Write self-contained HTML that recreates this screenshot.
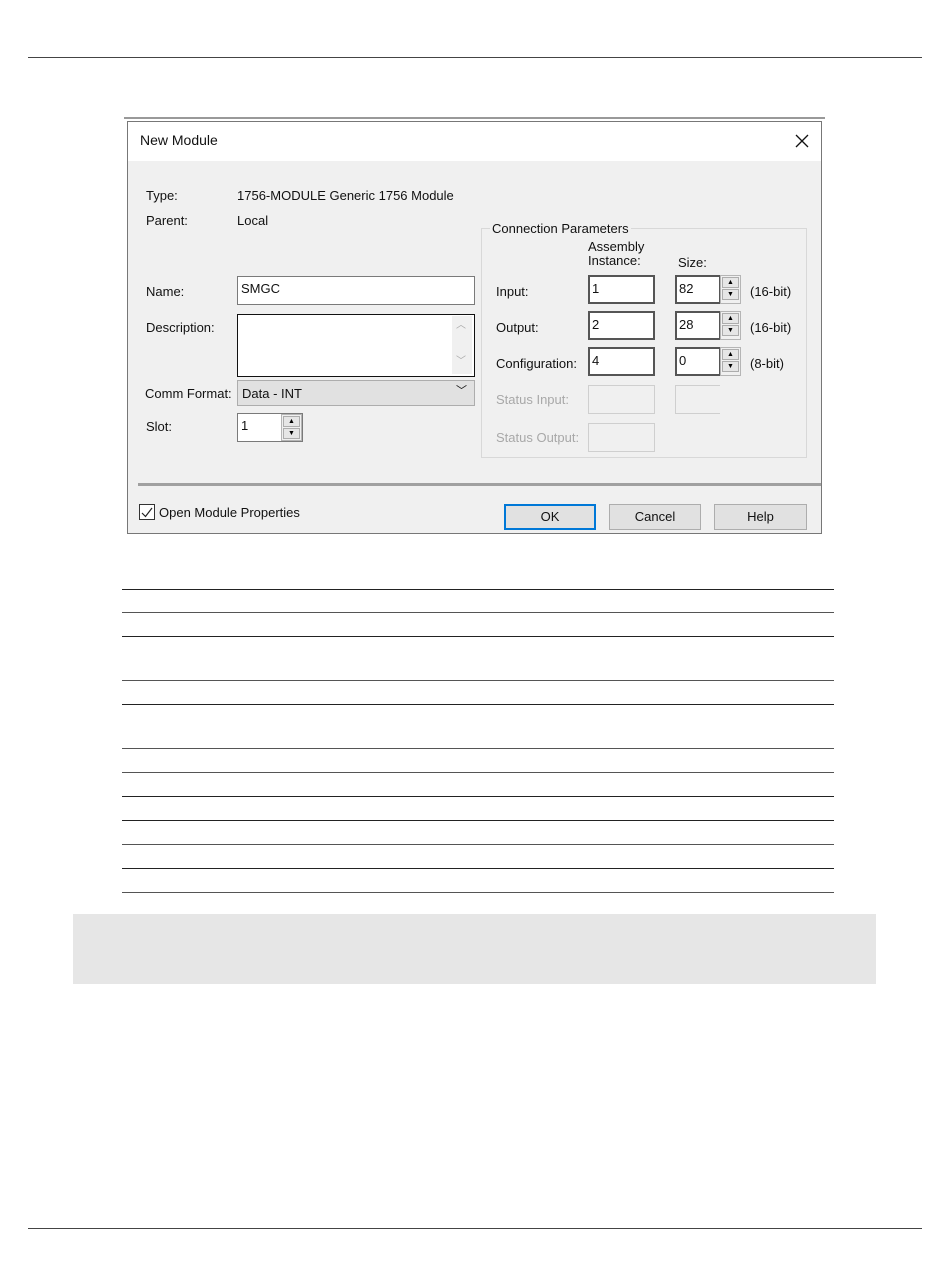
<!DOCTYPE html>
<html><head><style>
body{margin:0;width:950px;height:1267px;background:#fff;position:relative;font-family:"Liberation Sans",sans-serif;overflow:hidden}
.a{position:absolute}
.t{position:absolute;font-size:13px;color:#111;line-height:15px;white-space:nowrap}
.g{color:#a8a8a8}
.box{position:absolute;background:#fff;border:1px solid #7a7a7a;box-sizing:border-box}
.dbox{position:absolute;background:#f0f0f0;border:1px solid #cfcfcf;box-sizing:border-box}
.spin{position:absolute;width:21px;background:#f0f0f0;border:1px solid #b5b5b5;box-sizing:border-box}
.spin div{height:11px;margin:1px;border:1px solid #adadad;background:#e6e6e6;box-sizing:border-box;font-size:7px;line-height:9px;text-align:center;color:#000}
.btn{position:absolute;height:26px;background:#e1e1e1;border:1px solid #adadad;box-sizing:border-box;font-size:13px;text-align:center;line-height:24px;color:#111}
.hl{position:absolute;left:122px;width:712px;height:1px;background:#222}
</style></head><body>
<div class="a" style="left:28px;top:57px;width:894px;height:1px;background:#444"></div>
<div class="a" style="left:28px;top:1228px;width:894px;height:1px;background:#444"></div>

<div class="a" style="left:124px;top:116px;width:701px;height:420px;background:#fff"></div>
<div class="a" style="left:124px;top:117px;width:701px;height:2px;background:#999"></div>
<div class="a" style="left:127px;top:121px;width:695px;height:413px;background:#f0f0f0;border:1px solid #777;box-sizing:border-box"></div>
<div class="a" style="left:128px;top:122px;width:693px;height:39px;background:#fff"></div>
<div class="t" style="left:140px;top:133px;font-size:14px">New Module</div>
<svg class="a" style="left:795px;top:134px" width="14" height="14"><path d="M1 1L13 13M13 1L1 13" stroke="#111" stroke-width="1.3" fill="none"/></svg>

<div class="t" style="left:146px;top:188px">Type:</div>
<div class="t" style="left:237px;top:188px">1756-MODULE Generic 1756 Module</div>
<div class="t" style="left:146px;top:213px">Parent:</div>
<div class="t" style="left:237px;top:213px">Local</div>
<div class="t" style="left:146px;top:284px">Name:</div>
<div class="box" style="left:237px;top:276px;width:238px;height:29px"></div>
<div class="t" style="left:241px;top:281px">SMGC</div>
<div class="t" style="left:146px;top:320px">Description:</div>
<div class="box" style="left:237px;top:314px;width:238px;height:63px;border:1px solid #111"></div>
<div class="a" style="left:452px;top:316px;width:20px;height:58px;background:#f0f0f0"></div>
<div class="t g" style="left:456px;top:318px;font-size:10px">︿</div>
<div class="t g" style="left:456px;top:354px;font-size:10px">﹀</div>
<div class="t" style="left:145px;top:386px">Comm Format:</div>
<div class="a" style="left:237px;top:380px;width:238px;height:26px;background:#e1e1e1;border:1px solid #adadad;box-sizing:border-box"></div>
<div class="t" style="left:242px;top:386px">Data - INT</div>
<div class="t" style="left:456px;top:384px;font-size:11px">﹀</div>
<div class="t" style="left:146px;top:419px">Slot:</div>
<div class="box" style="left:237px;top:413px;width:66px;height:29px"></div>
<div class="t" style="left:241px;top:418px">1</div>
<div class="spin" style="left:281px;top:414px;height:27px"><div>▲</div><div>▼</div></div>

<div class="a" style="left:481px;top:228px;width:326px;height:230px;border:1px solid #d8d8d8;box-sizing:border-box"></div>
<div class="t" style="left:490px;top:221px;background:#f0f0f0;padding:0 2px">Connection Parameters</div>
<div class="t" style="left:588px;top:240px;line-height:14px">Assembly<br>Instance:</div>
<div class="t" style="left:678px;top:255px">Size:</div>

<div class="t" style="left:496px;top:284px">Input:</div>
<div class="t" style="left:496px;top:320px">Output:</div>
<div class="t" style="left:496px;top:356px">Configuration:</div>
<div class="t g" style="left:496px;top:392px">Status Input:</div>
<div class="t g" style="left:496px;top:430px">Status Output:</div>

<div class="box" style="left:588px;top:275px;width:67px;height:29px;border-width:2px;border-color:#555"></div><div class="t" style="left:592px;top:281px">1</div>
<div class="box" style="left:588px;top:311px;width:67px;height:29px;border-width:2px;border-color:#555"></div><div class="t" style="left:592px;top:317px">2</div>
<div class="box" style="left:588px;top:347px;width:67px;height:29px;border-width:2px;border-color:#555"></div><div class="t" style="left:592px;top:353px">4</div>
<div class="dbox" style="left:588px;top:385px;width:67px;height:29px"></div>
<div class="dbox" style="left:588px;top:423px;width:67px;height:29px"></div>

<div class="box" style="left:675px;top:275px;width:46px;height:29px;border-width:2px;border-color:#555"></div><div class="t" style="left:679px;top:281px">82</div>
<div class="spin" style="left:720px;top:275px;height:29px"><div>▲</div><div>▼</div></div>
<div class="t" style="left:750px;top:284px">(16-bit)</div>
<div class="box" style="left:675px;top:311px;width:46px;height:29px;border-width:2px;border-color:#555"></div><div class="t" style="left:679px;top:317px">28</div>
<div class="spin" style="left:720px;top:311px;height:29px"><div>▲</div><div>▼</div></div>
<div class="t" style="left:750px;top:320px">(16-bit)</div>
<div class="box" style="left:675px;top:347px;width:46px;height:29px;border-width:2px;border-color:#555"></div><div class="t" style="left:679px;top:353px">0</div>
<div class="spin" style="left:720px;top:347px;height:29px"><div>▲</div><div>▼</div></div>
<div class="t" style="left:750px;top:356px">(8-bit)</div>
<div class="dbox" style="left:675px;top:385px;width:45px;height:29px;border-right:none"></div>

<div class="a" style="left:138px;top:483px;width:683px;height:3px;background:#a0a0a0"></div>
<div class="a" style="left:139px;top:504px;width:16px;height:16px;border:1px solid #333;background:#fff;box-sizing:border-box"></div>
<svg class="a" style="left:141px;top:507px" width="12" height="11"><path d="M1 6L4.5 9.5L11 1" stroke="#222" stroke-width="1.2" fill="none"/></svg>
<div class="t" style="left:159px;top:505px">Open Module Properties</div>
<div class="btn" style="left:504px;top:504px;width:92px;border:2px solid #0078d7;line-height:22px">OK</div>
<div class="btn" style="left:609px;top:504px;width:92px">Cancel</div>
<div class="btn" style="left:714px;top:504px;width:93px">Help</div>

<div class="hl" style="top:589px"></div>
<div class="hl" style="top:612px;background:#555"></div>
<div class="hl" style="top:636px"></div>
<div class="hl" style="top:680px;background:#555"></div>
<div class="hl" style="top:704px"></div>
<div class="hl" style="top:748px;background:#555"></div>
<div class="hl" style="top:772px;background:#555"></div>
<div class="hl" style="top:796px"></div>
<div class="hl" style="top:820px"></div>
<div class="hl" style="top:844px;background:#555"></div>
<div class="hl" style="top:868px"></div>
<div class="hl" style="top:892px;background:#555"></div>

<div class="a" style="left:73px;top:914px;width:803px;height:70px;background:#e6e6e6"></div>
</body></html>
